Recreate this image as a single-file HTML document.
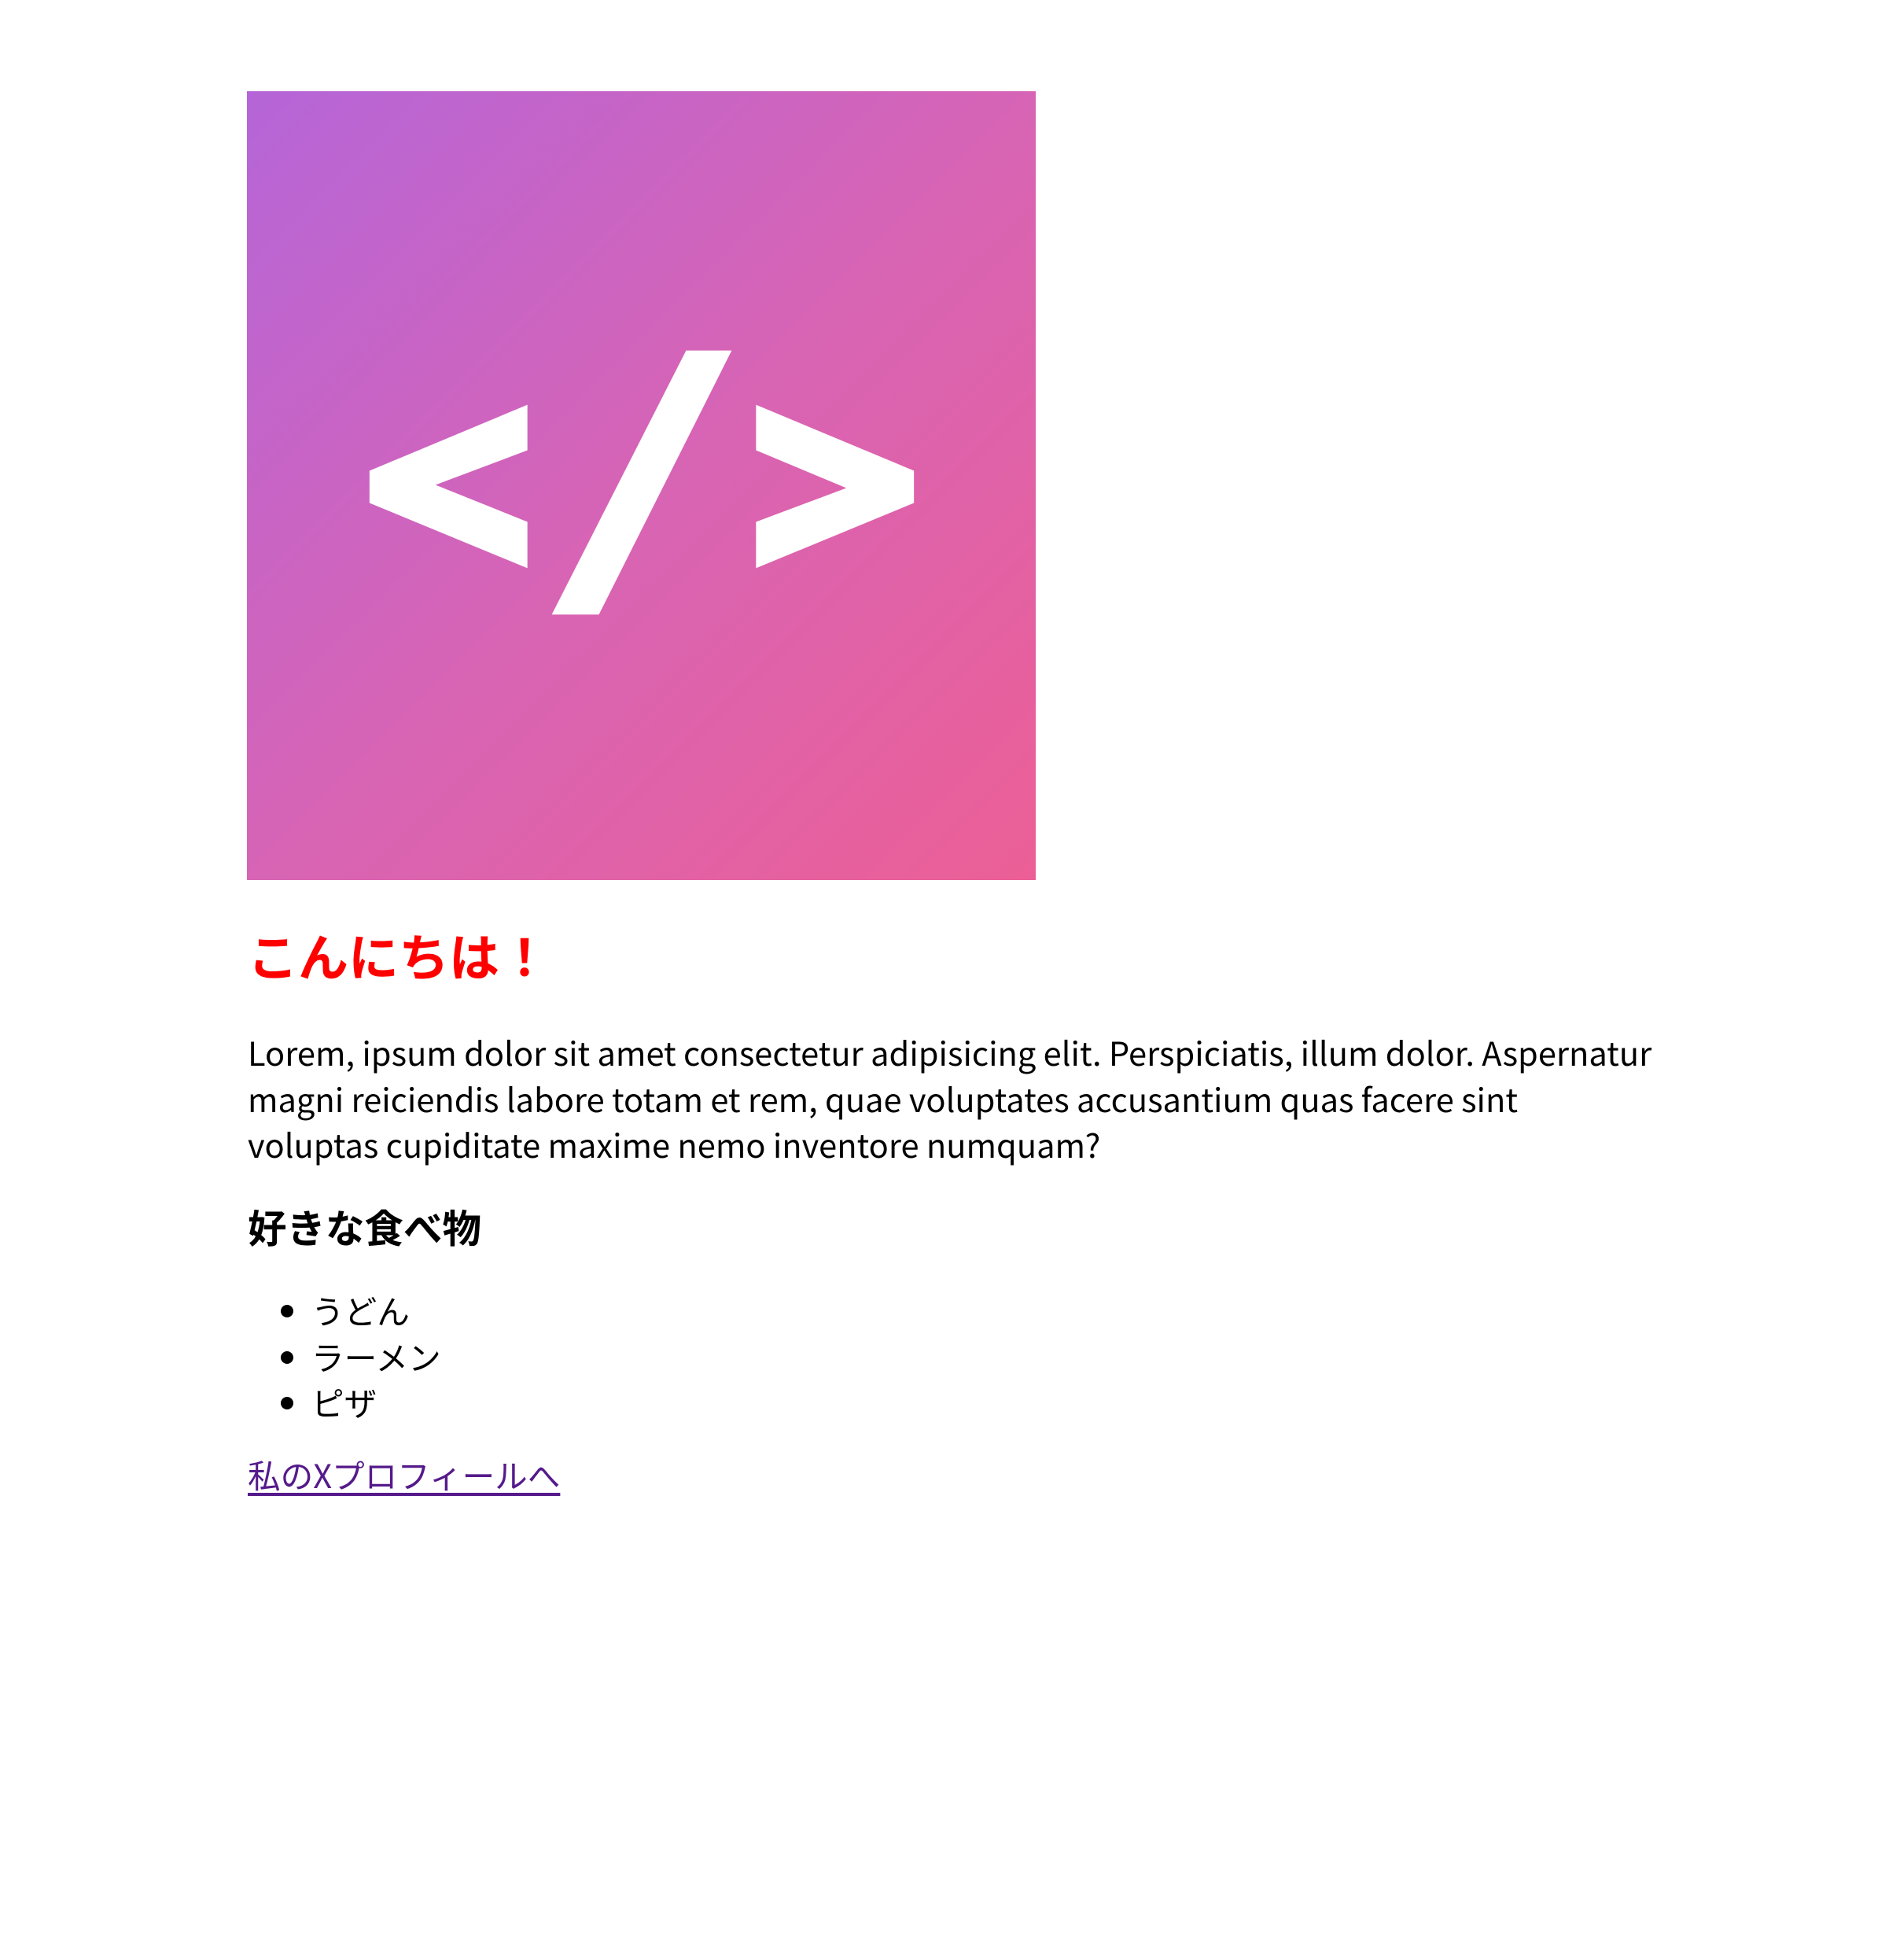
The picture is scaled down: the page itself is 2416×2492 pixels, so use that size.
<!DOCTYPE html>
<html><head><meta charset="utf-8"><style>
html,body{margin:0;padding:0;background:#fff;width:2416px;height:2492px;overflow:hidden}
body{position:relative;font-family:"Noto Sans CJK JP","Liberation Sans",sans-serif;color:#000}
.a{position:absolute;left:315px;margin:0}
#img{top:116px;left:314px;width:1003px;height:1003px;background:linear-gradient(135deg,#b565d8 0%,#d764b5 50%,#ec5f96 100%)}
h1{font-size:64px;line-height:64px;color:#f00;font-weight:700;top:1182px}
p{font-size:41.6px;line-height:58.5px;top:1308px;white-space:nowrap}
h2{font-size:49.5px;line-height:50px;font-weight:700;top:1535px}
ul{top:1636px;left:315px;padding:0 0 0 81px;font-size:41.6px;line-height:58.5px;list-style:disc}
a{font-size:41.6px;line-height:58px;top:1845px;color:#551a8b;text-decoration:underline;text-underline-offset:6px}
</style></head><body>
<div class="a" id="img"><svg width="1003" height="1003" viewBox="317 117 1004 1004" style="position:absolute;left:0;top:0">
<polygon fill="#fff" points="876,447 934,447 765,783 705,783"/>
<polygon fill="#fff" points="674,516 674,574 557,618 674,665 674,724 473,641 473,600"/>
<polygon fill="#fff" points="965,516 1166,600 1166,641 965,724 965,665 1080,622 965,574"/>
</svg></div>
<h1 class="a">こんにちは！</h1>
<p class="a">Lorem, ipsum dolor sit amet consectetur adipisicing elit. Perspiciatis, illum dolor. Aspernatur<br>magni reiciendis labore totam et rem, quae voluptates accusantium quas facere sint<br>voluptas cupiditate maxime nemo inventore numquam?</p>
<h2 class="a">好きな食べ物</h2>
<ul class="a"><li>うどん</li><li>ラーメン</li><li>ピザ</li></ul>
<a class="a" href="#">私のXプロフィールへ</a>
</body></html>
